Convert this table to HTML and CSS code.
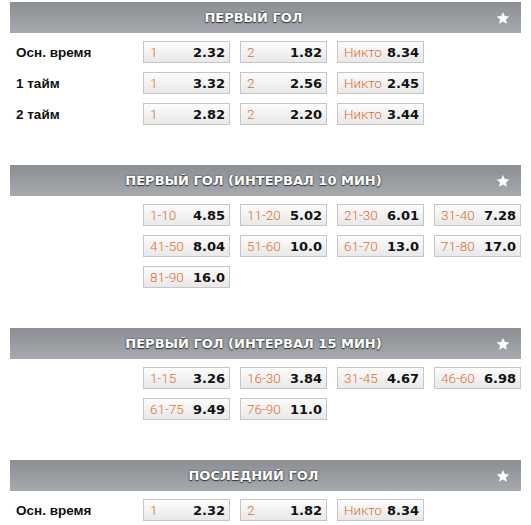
FILE: index.html
```html
<!DOCTYPE html>
<html lang="ru">
<head>
<meta charset="utf-8">
<link rel="stylesheet" href="styles.css">
</head>
<body>
<div class="page">
  <section class="market">
    <div class="market-head"><span class="market-title">Первый гол</span><svg class="star" viewBox="0 0 24 24"><path d="M12 1.5l3.1 7.1 7.7.7-5.8 5.1 1.7 7.6L12 18l-6.7 4 1.7-7.6-5.8-5.1 7.7-.7z"/></svg></div>
    <div class="rows">
      <div class="label">Осн. время</div>
      <div class="odd"><span class="k">1</span><span class="v">2.32</span></div>
      <div class="odd"><span class="k">2</span><span class="v">1.82</span></div>
      <div class="odd"><span class="k">Никто</span><span class="v">8.34</span></div>
      <div class="label">1 тайм</div>
      <div class="odd"><span class="k">1</span><span class="v">3.32</span></div>
      <div class="odd"><span class="k">2</span><span class="v">2.56</span></div>
      <div class="odd"><span class="k">Никто</span><span class="v">2.45</span></div>
      <div class="label">2 тайм</div>
      <div class="odd"><span class="k">1</span><span class="v">2.82</span></div>
      <div class="odd"><span class="k">2</span><span class="v">2.20</span></div>
      <div class="odd"><span class="k">Никто</span><span class="v">3.44</span></div>
    </div>
  </section>

  <section class="market">
    <div class="market-head"><span class="market-title">Первый гол (интервал 10 мин)</span><svg class="star" viewBox="0 0 24 24"><path d="M12 1.5l3.1 7.1 7.7.7-5.8 5.1 1.7 7.6L12 18l-6.7 4 1.7-7.6-5.8-5.1 7.7-.7z"/></svg></div>
    <div class="rows grid4">
      <div class="odd"><span class="k">1-10</span><span class="v">4.85</span></div>
      <div class="odd"><span class="k">11-20</span><span class="v">5.02</span></div>
      <div class="odd"><span class="k">21-30</span><span class="v">6.01</span></div>
      <div class="odd"><span class="k">31-40</span><span class="v">7.28</span></div>
      <div class="odd"><span class="k">41-50</span><span class="v">8.04</span></div>
      <div class="odd"><span class="k">51-60</span><span class="v">10.0</span></div>
      <div class="odd"><span class="k">61-70</span><span class="v">13.0</span></div>
      <div class="odd"><span class="k">71-80</span><span class="v">17.0</span></div>
      <div class="odd"><span class="k">81-90</span><span class="v">16.0</span></div>
    </div>
  </section>

  <section class="market">
    <div class="market-head"><span class="market-title">Первый гол (интервал 15 мин)</span><svg class="star" viewBox="0 0 24 24"><path d="M12 1.5l3.1 7.1 7.7.7-5.8 5.1 1.7 7.6L12 18l-6.7 4 1.7-7.6-5.8-5.1 7.7-.7z"/></svg></div>
    <div class="rows grid4">
      <div class="odd"><span class="k">1-15</span><span class="v">3.26</span></div>
      <div class="odd"><span class="k">16-30</span><span class="v">3.84</span></div>
      <div class="odd"><span class="k">31-45</span><span class="v">4.67</span></div>
      <div class="odd"><span class="k">46-60</span><span class="v">6.98</span></div>
      <div class="odd"><span class="k">61-75</span><span class="v">9.49</span></div>
      <div class="odd"><span class="k">76-90</span><span class="v">11.0</span></div>
    </div>
  </section>

  <section class="market">
    <div class="market-head"><span class="market-title">Последний гол</span><svg class="star" viewBox="0 0 24 24"><path d="M12 1.5l3.1 7.1 7.7.7-5.8 5.1 1.7 7.6L12 18l-6.7 4 1.7-7.6-5.8-5.1 7.7-.7z"/></svg></div>
    <div class="rows">
      <div class="label">Осн. время</div>
      <div class="odd"><span class="k">1</span><span class="v">2.32</span></div>
      <div class="odd"><span class="k">2</span><span class="v">1.82</span></div>
      <div class="odd"><span class="k">Никто</span><span class="v">8.34</span></div>
    </div>
  </section>
</div>
</body>
</html>
```

FILE: styles.css
```css
* { box-sizing: border-box; }
html, body { margin: 0; padding: 0; background: #fff; }
body { font-family: "Liberation Sans", Arial, sans-serif; color: #111; }

.page {
  padding: 2px 10px 0 10px;
  width: 531px;
  display: flex;
  flex-direction: column;
  gap: 40px;
}

.market-head {
  position: relative;
  height: 31px;
  padding-right: 24px;
  background: linear-gradient(#8b8f94, #a6a9ad);
  display: flex;
  align-items: center;
  justify-content: center;
}
.market-title {
  color: #fff;
  font-family: "DejaVu Sans", sans-serif;
  font-weight: bold;
  font-size: 13px;
  text-transform: uppercase;
  letter-spacing: 0;
  text-shadow: 0 0 2px #3a3a3a, 0 1px 1px #333;
}
.star {
  position: absolute;
  right: 11px;
  top: 9px;
  width: 14px;
  height: 14px;
  fill: #fff;
}

.rows {
  margin-top: 8px;
  display: grid;
  grid-template-columns: 123px repeat(4, 87px);
  column-gap: 10px;
  row-gap: 9px;
  grid-auto-rows: 22px;
}
.rows .label { grid-column: 1; }
.grid4 .odd:nth-child(4n+1) { grid-column: 2; }

.label {
  font-weight: bold;
  font-size: 13.5px;
  padding-left: 6px;
  display: flex;
  align-items: center;
}

.odd {
  display: flex;
  align-items: center;
  justify-content: space-between;
  border: 1px solid #c6c6c6;
  background: linear-gradient(#fcfcfc, #e8e8e8);
  padding: 0 4px 0 6px;
}
.odd .k {
  font-family: Roboto, "Liberation Sans", sans-serif;
  font-weight: 300;
  font-size: 13.5px;
  color: #dc6f2e;
}
.odd .v {
  font-family: "DejaVu Sans", sans-serif;
  font-weight: bold;
  font-size: 13px;
  color: #111;
}
```
